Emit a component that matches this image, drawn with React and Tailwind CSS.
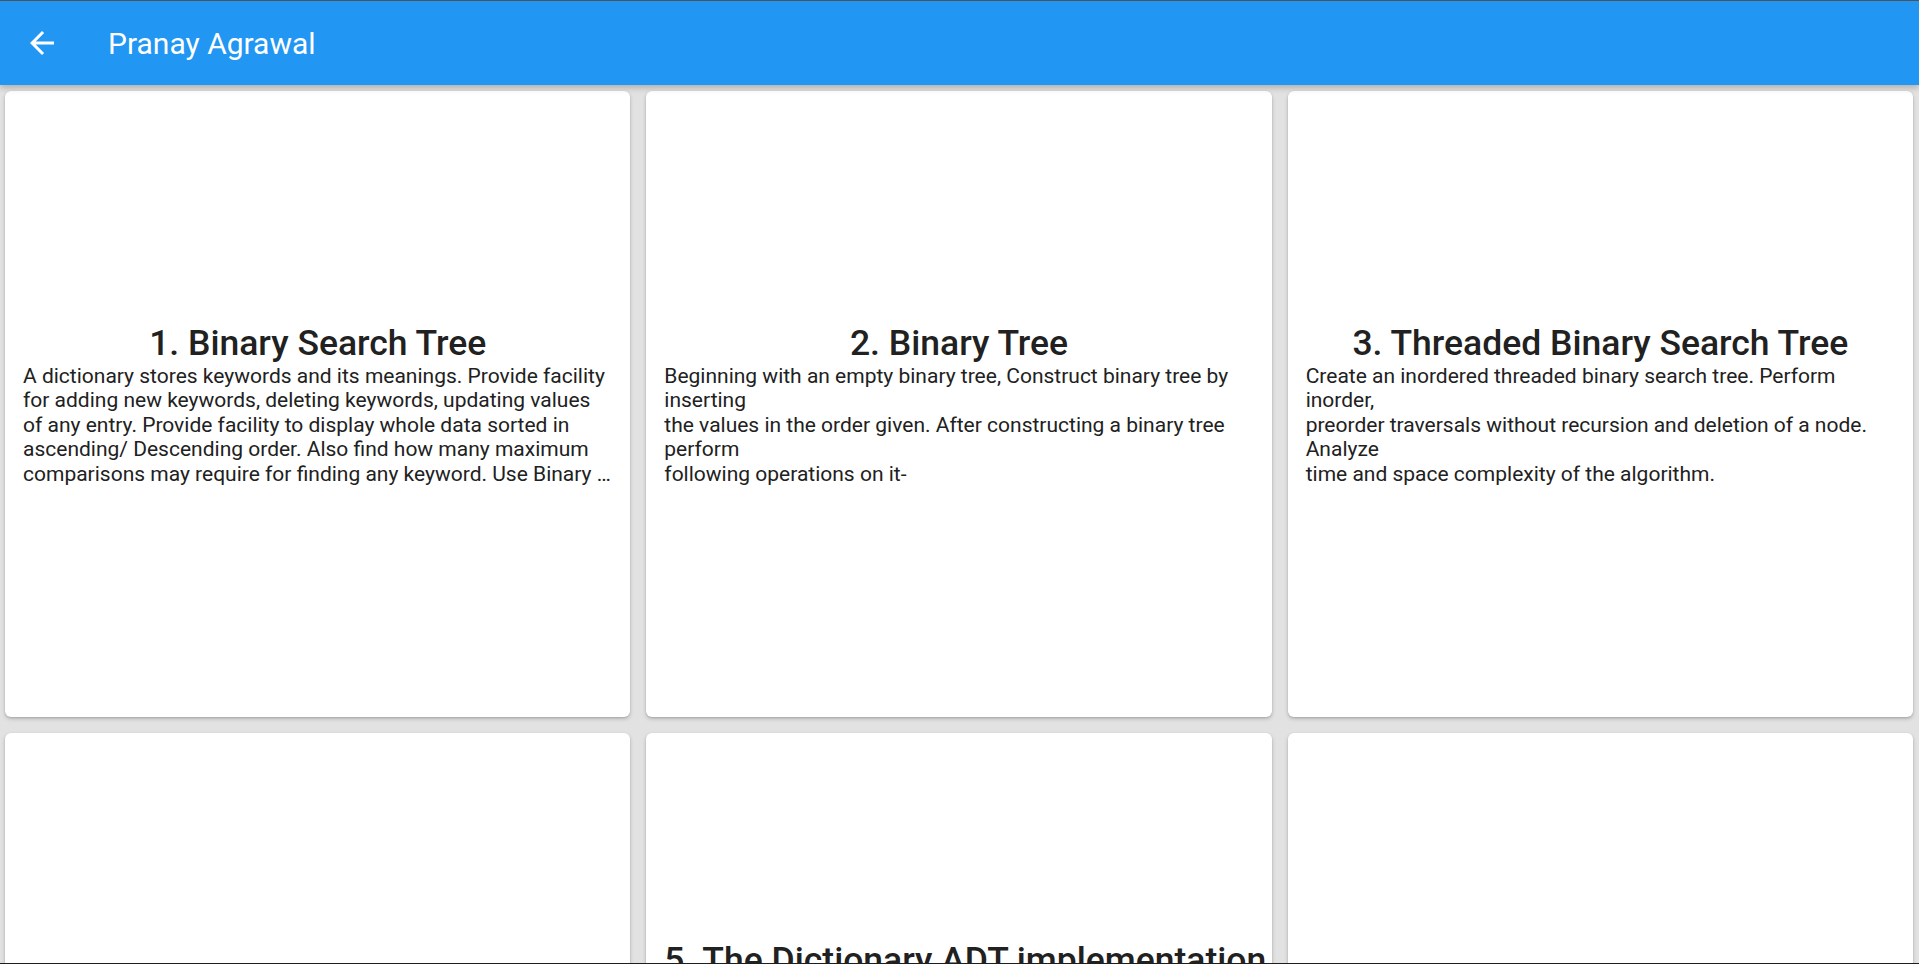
import React from "react";

const cards = [
  {
    title: "1. Binary Search Tree",
    lines: [
      "A dictionary stores keywords and its meanings. Provide facility",
      "for adding new keywords, deleting keywords, updating values",
      "of any entry. Provide facility to display whole data sorted in",
      "ascending/ Descending order. Also find how many maximum",
      "comparisons may require for finding any keyword. Use Binary \u2026",
    ],
  },
  {
    title: "2. Binary Tree",
    lines: [
      "Beginning with an empty binary tree, Construct binary tree by",
      "inserting",
      "the values in the order given. After constructing a binary tree",
      "perform",
      "following operations on it-",
    ],
  },
  {
    title: "3. Threaded Binary Search Tree",
    lines: [
      "Create an inordered threaded binary search tree. Perform",
      "inorder,",
      "preorder traversals without recursion and deletion of a node.",
      "Analyze",
      "time and space complexity of the algorithm.",
    ],
  },
  {
    title: "4. Graph Representation",
    lines: [
      "Represent a given graph using adjacency matrix/list to perform",
      "DFS and using adjacency list to perform BFS. Use the map of",
      "the area around the college as the graph.",
    ],
  },
  {
    title: "5. The Dictionary ADT implementation",
    lines: [
      "Implement all the functions of a dictionary (ADT) using",
      "hashing and handle collisions using chaining with / without",
      "replacement.",
      "Data: Set of (key, value) pairs, Keys are mapped to values,",
      "Keys must be comparable, Keys must be unique.",
      "Standard Operations: Insert(key, value), Find(key),",
      "Delete(key)",
    ],
  },
  {
    title: "6. Minimum Spanning Tree",
    lines: [
      "There are flight paths between cities. If there is a flight",
      "between city A and city B then there is an edge between the",
      "cities. Find the cost of connecting all the cities.",
      "Use Prim's or Kruskal's algorithm.",
    ],
  },
];

function ArrowBack() {
  return (
    <svg viewBox="0 0 24 24" width="36" height="36" fill="#ffffff">
      <path d="M20 11H7.83l5.59-5.59L12 4l-8 8 8 8 1.41-1.41L7.83 13H20v-2z" />
    </svg>
  );
}

export default function App() {
  return (
    <div className="h-screen w-full overflow-hidden flex flex-col bg-[#e2e2e2] border-t border-t-[#4f5256] border-b border-b-[#1e1e1e] font-['Roboto','Noto_Sans',sans-serif]">
      <header className="h-[84px] shrink-0 bg-[#2196F3] flex items-center relative z-10 shadow-[0_3px_6px_rgba(0,0,0,0.22)]">
        <button className="ml-6 w-9 h-9 flex items-center justify-center">
          <ArrowBack />
        </button>
        <span className="ml-12 pt-[2px] text-white text-[30px] font-normal leading-none">
          Pranay Agrawal
        </span>
      </header>
      <main className="flex-1 overflow-hidden pt-[6px] pl-[5px] pr-[6px] grid grid-cols-3 gap-4 content-start">
        {cards.map((c, i) => (
          <div
            key={i}
            className="h-[626px] bg-white rounded-[6px] shadow-[0_2px_4px_rgba(0,0,0,0.18),0_1px_2px_rgba(0,0,0,0.12)] flex flex-col justify-center px-[18px] overflow-hidden"
          >
            <div className="text-center text-[35.5px] leading-[42px] font-medium text-[#212121] whitespace-nowrap">
              {c.title}
            </div>
            <div className="text-[21px] leading-[24.5px] text-[#212121] whitespace-pre">
              {c.lines.join("\n")}
            </div>
          </div>
        ))}
      </main>
    </div>
  );
}
